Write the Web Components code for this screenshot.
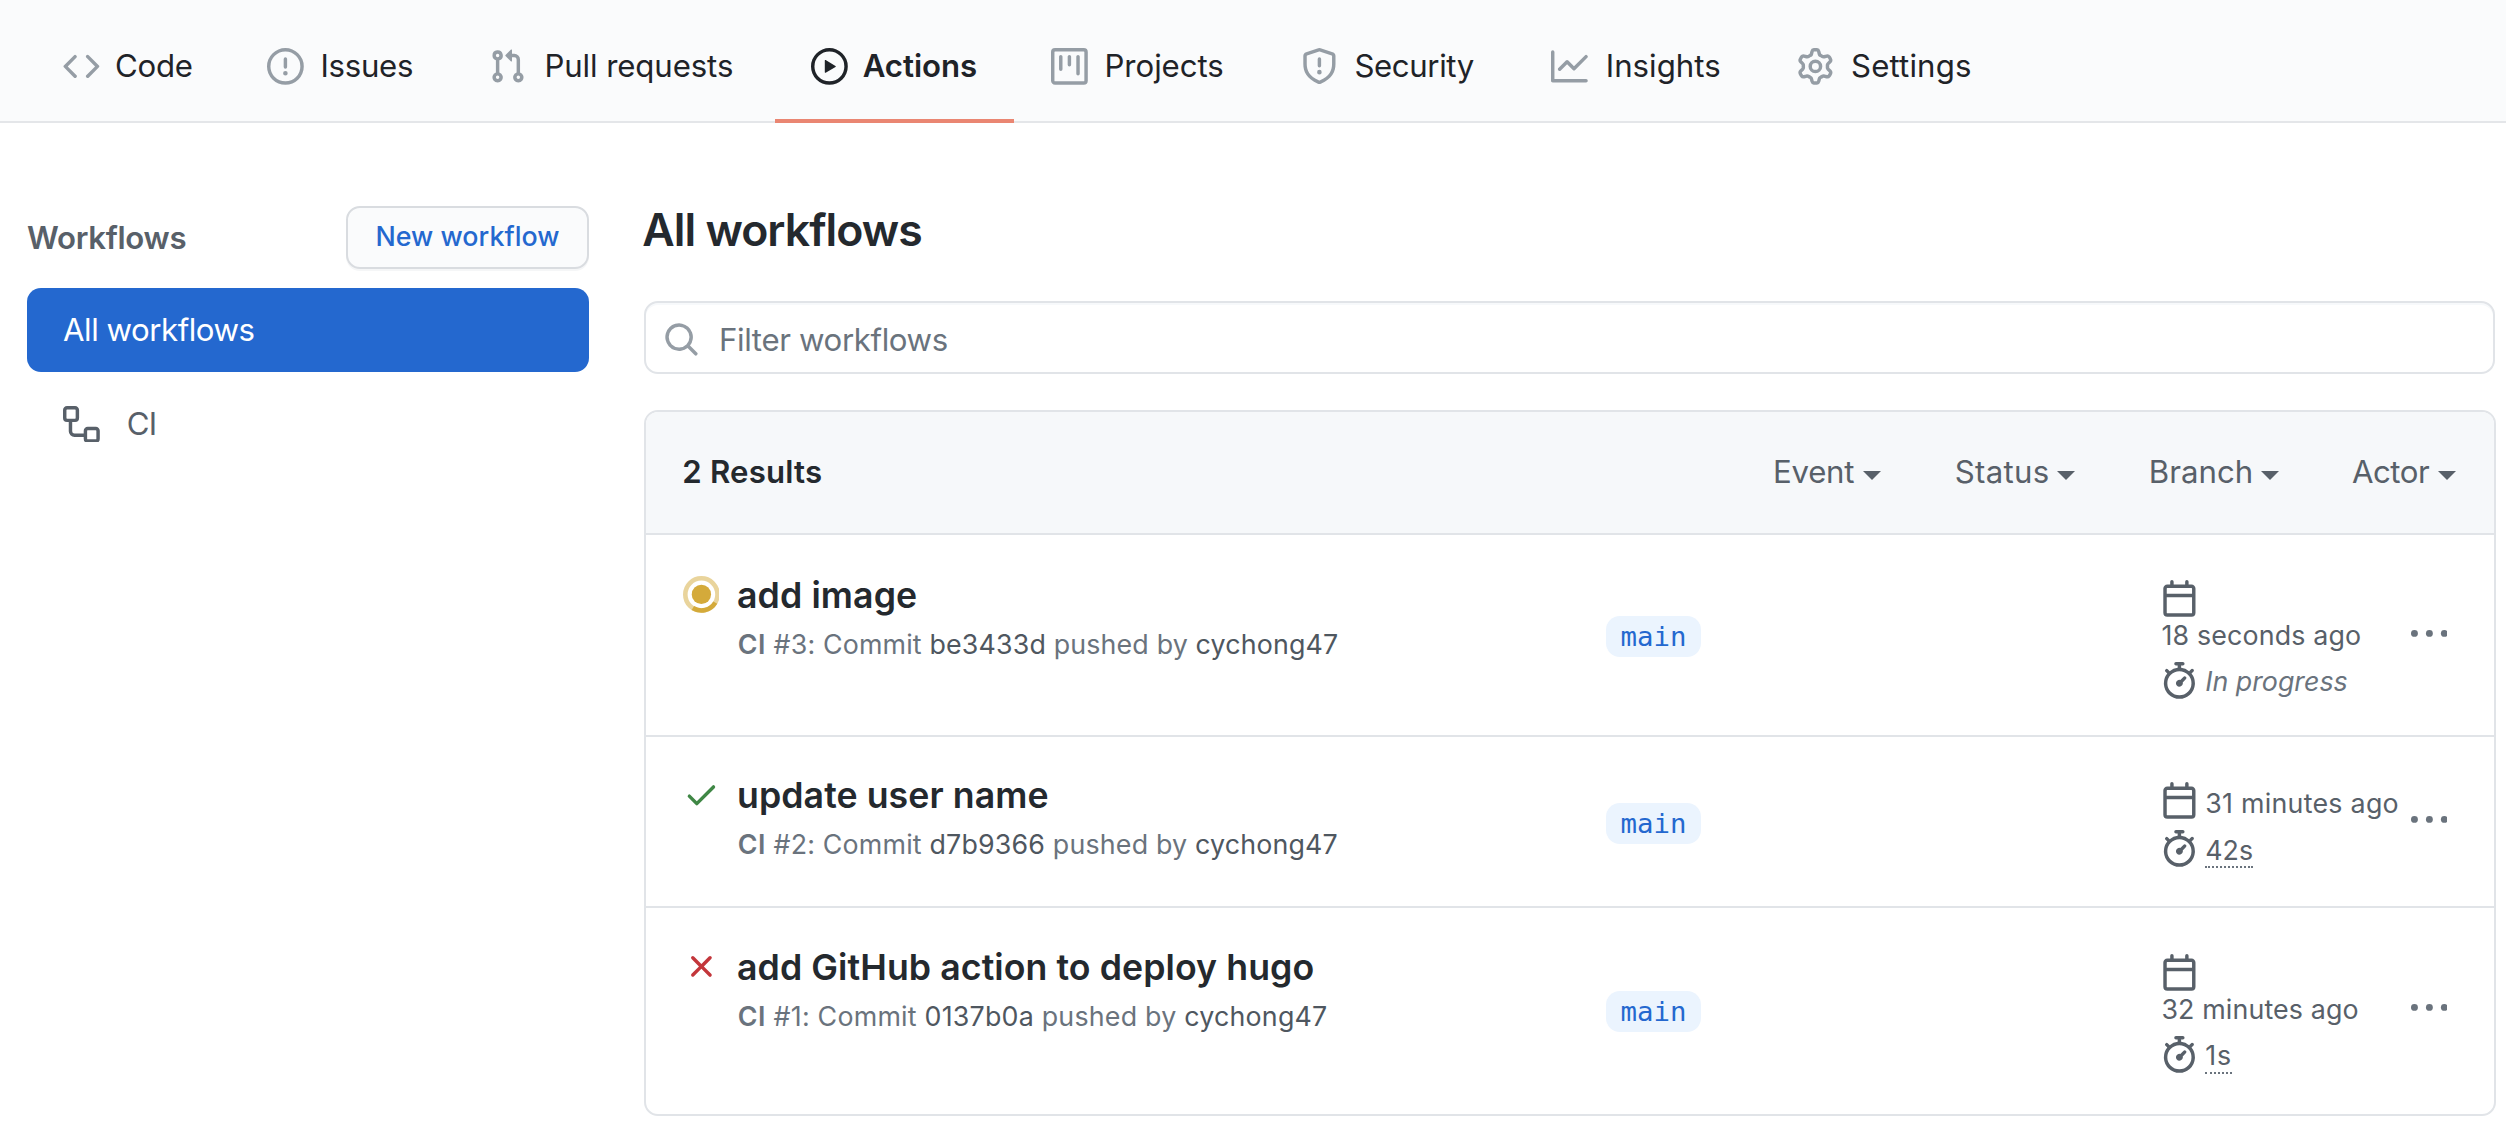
<!DOCTYPE html>
<html lang="en">
<head>
<meta charset="utf-8">
<title>Actions</title>
<style>
body{margin:0;background:#fff;color:#24292e;font-family:Inter,"Liberation Sans",sans-serif;font-size:31.2px}
</style>
</head>
<body>
<actions-page></actions-page>
<script>
const ICONS={
code:'<path d="M4.72 3.22a.75.75 0 011.06 1.06L2.06 8l3.72 3.72a.75.75 0 11-1.06 1.06L.47 8.53a.75.75 0 010-1.06l4.25-4.25zm6.56 0a.75.75 0 10-1.06 1.06L13.94 8l-3.72 3.72a.75.75 0 101.06 1.06l4.25-4.25a.75.75 0 000-1.06l-4.25-4.25z"/>',
issue:'<path d="M8 1.5a6.5 6.5 0 100 13 6.5 6.5 0 000-13zM0 8a8 8 0 1116 0A8 8 0 010 8zm9 3a1 1 0 11-2 0 1 1 0 012 0zm-.25-6.25a.75.75 0 00-1.5 0v3.5a.75.75 0 001.5 0v-3.5z"/>',
pull:'<path d="M7.177 3.073L9.573.677A.25.25 0 0110 .854v4.792a.25.25 0 01-.427.177L7.177 3.427a.25.25 0 010-.354zM3.75 2.5a.75.75 0 100 1.5.75.75 0 000-1.5zm-2.25.75a2.25 2.25 0 113 2.122v5.256a2.251 2.251 0 11-1.5 0V5.372A2.25 2.25 0 011.5 3.25zM11 2.5h-1V4h1a1 1 0 011 1v5.628a2.251 2.251 0 101.5 0V5A2.5 2.5 0 0011 2.5zm1 10.25a.75.75 0 111.5 0 .75.75 0 01-1.5 0zM3.75 12a.75.75 0 100 1.5.75.75 0 000-1.5z"/>',
play:'<path d="M1.5 8a6.5 6.5 0 1113 0 6.5 6.5 0 01-13 0zM8 0a8 8 0 100 16A8 8 0 008 0zM6.379 5.227A.25.25 0 006 5.442v5.117a.25.25 0 00.379.214l4.264-2.559a.25.25 0 000-.428L6.379 5.227z"/>',
project:'<path d="M1.75 0A1.75 1.75 0 000 1.75v12.5C0 15.216.784 16 1.75 16h12.5A1.75 1.75 0 0016 14.25V1.75A1.75 1.75 0 0014.25 0H1.75zM1.5 1.75a.25.25 0 01.25-.25h12.5a.25.25 0 01.25.25v12.5a.25.25 0 01-.25.25H1.75a.25.25 0 01-.25-.25V1.75zM11.75 3a.75.75 0 00-.75.75v7.5a.75.75 0 001.5 0v-7.5a.75.75 0 00-.75-.75zm-8.25.75a.75.75 0 011.5 0v5.5a.75.75 0 01-1.5 0v-5.5zM8 3a.75.75 0 00-.75.75v3.5a.75.75 0 001.5 0v-3.5A.75.75 0 008 3z"/>',
shield:'<path fill-rule="evenodd" d="M7.467.133a1.75 1.75 0 011.066 0l5.25 1.68A1.75 1.75 0 0115 3.48V7c0 1.566-.32 3.182-1.303 4.682-.983 1.498-2.585 2.813-5.032 3.855a1.7 1.7 0 01-1.33 0c-2.447-1.042-4.049-2.357-5.032-3.855C1.32 10.182 1 8.566 1 7V3.48a1.75 1.75 0 011.217-1.667l5.25-1.68zm.61 1.429a.25.25 0 00-.153 0l-5.25 1.68a.25.25 0 00-.174.238V7c0 1.358.275 2.666 1.057 3.86.784 1.194 2.121 2.34 4.366 3.297a.2.2 0 00.154 0c2.245-.956 3.582-2.104 4.366-3.298C13.225 9.666 13.5 8.36 13.5 7V3.48a.25.25 0 00-.174-.237l-5.25-1.68zM9 10.5a1 1 0 11-2 0 1 1 0 012 0zm-.25-5.75a.75.75 0 10-1.5 0v3a.75.75 0 001.5 0v-3z"/>',
graph:'<path d="M1.5 1.75a.75.75 0 00-1.5 0v12.5c0 .414.336.75.75.75h14.5a.75.75 0 000-1.5H1.5V1.75zm14.28 2.53a.75.75 0 00-1.06-1.06L10 7.94 7.53 5.47a.75.75 0 00-1.06 0L3.22 8.72a.75.75 0 001.06 1.06L7 7.06l2.47 2.47a.75.75 0 001.06 0l5.25-5.25z"/>',
gear:(d=>`<path d="${d}" stroke="currentColor" stroke-width="3" stroke-linejoin="round"/><path d="${d}" fill="#fafbfc"/><circle cx="8" cy="8" r="2.25" fill="none" stroke="currentColor" stroke-width="1.5"/>`)("M7.429 1.525a6.593 6.593 0 011.142 0c.036.003.108.036.137.146l.289 1.105c.147.56.55.967.997 1.189.174.086.341.183.501.29.417.278.97.423 1.53.27l1.102-.303c.11-.03.175.016.195.046.219.31.41.641.573.989.014.031.022.11-.059.19l-.815.806c-.411.406-.562.957-.53 1.456a4.588 4.588 0 010 .582c-.032.499.119 1.05.53 1.456l.815.806c.08.08.073.159.059.19a6.494 6.494 0 01-.573.99c-.02.029-.086.074-.195.045l-1.103-.303c-.559-.153-1.112-.008-1.529.27-.16.107-.327.204-.5.29-.449.222-.851.628-.998 1.189l-.289 1.105c-.029.11-.101.143-.137.146a6.613 6.613 0 01-1.142 0c-.036-.003-.108-.037-.137-.146l-.289-1.105c-.147-.56-.55-.967-.997-1.189a4.502 4.502 0 01-.501-.29c-.417-.278-.97-.423-1.53-.27l-1.102.303c-.11.03-.175-.016-.195-.046a6.492 6.492 0 01-.573-.989c-.014-.031-.022-.11.059-.19l.815-.806c.411-.406.562-.957.53-1.456a4.587 4.587 0 010-.582c.032-.499-.119-1.05-.53-1.456l-.815-.806c-.08-.08-.073-.159-.059-.19a6.44 6.44 0 01.573-.99c.02-.029.086-.075.195-.045l1.103.303c.559.153 1.112.008 1.529-.27.16-.107.327-.204.5-.29.449-.222.851-.628.998-1.189l.289-1.105c.029-.11.101-.143.137-.146z"),
workflow:'<path fill-rule="evenodd" d="M0 1.75C0 .784.784 0 1.75 0h3.5C6.216 0 7 .784 7 1.75v3.5A1.75 1.75 0 015.25 7H4v4a1 1 0 001 1h4v-1.25C9 9.784 9.784 9 10.75 9h3.5c.966 0 1.75.784 1.75 1.75v3.5A1.75 1.75 0 0114.25 16h-3.5A1.75 1.75 0 019 14.25v-.75H5A2.5 2.5 0 012.5 11V7h-.75A1.75 1.75 0 010 5.25v-3.5zm1.75-.25a.25.25 0 00-.25.25v3.5c0 .138.112.25.25.25h3.5a.25.25 0 00.25-.25v-3.5a.25.25 0 00-.25-.25h-3.5zm9 9a.25.25 0 00-.25.25v3.5c0 .138.112.25.25.25h3.5a.25.25 0 00.25-.25v-3.5a.25.25 0 00-.25-.25h-3.5z"/>',
search:'<path fill-rule="evenodd" d="M11.5 7a4.499 4.499 0 11-8.998 0A4.499 4.499 0 0111.5 7zm-.82 4.74a6 6 0 111.06-1.06l3.04 3.04a.75.75 0 11-1.06 1.06l-3.04-3.04z"/>',
calendar:'<path fill-rule="evenodd" d="M4.75 0a.75.75 0 01.75.75V2h5V.75a.75.75 0 011.5 0V2h1.25c.966 0 1.75.784 1.75 1.75v10.5A1.75 1.75 0 0113.25 16H2.75A1.75 1.75 0 011 14.25V3.75C1 2.784 1.784 2 2.75 2H4V.75A.75.75 0 014.75 0zm0 3.5h8.5a.25.25 0 01.25.25V6h-11V3.75a.25.25 0 01.25-.25h2zm-2.25 4v6.75c0 .138.112.25.25.25h10.5a.25.25 0 00.25-.25V7.5h-11z"/>',
stopwatch:'<path fill-rule="evenodd" d="M5.75.75A.75.75 0 016.5 0h3a.75.75 0 010 1.5h-.75v1l-.001.041a6.718 6.718 0 013.464 1.435l.007-.006.75-.75a.75.75 0 111.06 1.06l-.75.75-.006.007a6.75 6.75 0 11-10.548 0L2.72 5.03l-.75-.75a.75.75 0 011.06-1.06l.75.75.007.006A6.718 6.718 0 017.25 2.541a.756.756 0 010-.041v-1H6.5a.75.75 0 01-.75-.75zM8 14.5A5.25 5.25 0 108 4a5.25 5.25 0 000 10.5zm.389-6.7l1.33-1.33a.75.75 0 111.061 1.06L9.45 8.861A1.502 1.502 0 018 10.75a1.5 1.5 0 11.389-2.95z"/>',
kebab:'<circle cx="1.5" cy="8" r="1.5"/><circle cx="8" cy="8" r="1.5"/><circle cx="14.5" cy="8" r="1.5"/>',
running:'<circle cx="8" cy="8" r="4.2"/><circle cx="8" cy="8" r="7" fill="none" stroke="currentColor" stroke-width="2" opacity=".5"/><path d="M14.03 11.56A7 7 0 0 1 4.29 13.94" fill="none" stroke="currentColor" stroke-width="2"/>',
success:'<path d="M13.78 4.22a.75.75 0 010 1.06l-7.25 7.25a.75.75 0 01-1.06 0L2.22 9.28a.75.75 0 011.06-1.06L6 10.94l6.72-6.72a.75.75 0 011.06 0z"/>',
failure:'<path d="M3.72 3.72a.75.75 0 011.06 0L8 6.94l3.22-3.22a.75.75 0 111.06 1.06L9.06 8l3.22 3.22a.75.75 0 11-1.06 1.06L8 9.06l-3.22 3.22a.75.75 0 01-1.06-1.06L6.94 8 3.72 4.78a.75.75 0 010-1.06z"/>'
};
function define(name,render){
  customElements.define(name,class extends HTMLElement{
    connectedCallback(){
      if(this.shadowRoot)return;
      this.attachShadow({mode:'open'}).innerHTML=render(k=>this.getAttribute(k)||'',this);
    }
  });
}
define('oct-icon',a=>`<style>:host{display:block;flex:none;width:36.8px;height:36.8px}svg{display:block;width:100%;height:100%}</style><svg viewBox="0 0 16 16" fill="currentColor">${ICONS[a('name')]}</svg>`);

define('nav-tab',(a,el)=>`<style>
:host{display:flex;align-items:center;box-sizing:border-box;height:123px;padding:13.6px 0 0 36.5px;border-bottom:4px solid transparent;white-space:nowrap;color:#1f2328;line-height:40px}
:host([active]){border-color:#ea8672;font-weight:600}
oct-icon{color:#959da5}:host([active]) oct-icon{color:#1f2328}
</style><oct-icon name="${a('icon')}"></oct-icon><slot></slot>`);

define('repo-nav',()=>{
const tabs=[['code','Code',204,15.2,-.29],['issue','Issues',221.6,16.6,-.26],['pull','Pull requests',322.9,19,-.1],['play','Actions',239.5,14.4,-.04],['project','Projects',250,16.7,-.06],['shield','Security',250,16.7,-.4],['graph','Insights',246,18,.02],['gear','Settings',260,17.2,.15]];
return `<style>:host{display:flex;height:123px;padding-left:26.5px;background:#fafbfc;box-shadow:inset 0 -2px #e4e6e9}nav-tab{flex:none}</style>`+
tabs.map(([i,t,w,g,l])=>`<nav-tab icon="${i}" ${i=='play'?'active':''} style="width:${w}px"><span style="margin-left:${g}px;letter-spacing:${l}px">${t}</span></nav-tab>`).join('')});

define('side-item',a=>`<style>
:host{display:flex;align-items:center;box-sizing:border-box;height:84px;padding:0 0 0 36px;border-radius:14px;color:#586069;gap:27px;line-height:40px}
:host([selected]){background:#2468cf;color:#fff}
</style>${a('icon')?`<oct-icon name="${a('icon')}"></oct-icon>`:''}<slot></slot>`);

define('side-bar',()=>`<style>
:host{display:flex;flex-direction:column;flex:none;width:562px;padding-top:83px}
header{display:flex;align-items:center;justify-content:space-between;margin-bottom:19px}
h3{margin:0;font-size:31.2px;font-weight:600;letter-spacing:-.3px;color:#586069}
button{box-sizing:border-box;width:243px;height:63px;padding:0 0 3px;border:2px solid #d9dce0;border-radius:14px;background:#fafbfc;box-shadow:0 2px 0 #f5f6f7;color:#2468cf;font:500 26.8px Inter,sans-serif;letter-spacing:.06px;white-space:nowrap}
side-item+side-item{margin-top:10px}
</style><header><h3>Workflows</h3><button>New workflow</button></header>
<side-item selected><span style="letter-spacing:-.47px">All workflows</span></side-item>
<side-item icon="workflow"><span style="letter-spacing:-.78px">CI</span></side-item>`);

define('filter-box',()=>`<style>
:host{display:flex;align-items:center;box-sizing:border-box;height:73px;padding:4.5px 0 0 16.7px;border:2px solid #e1e4e8;border-radius:14px;box-shadow:inset 0 2px 0 #f7f9fb;color:#959da5;gap:19.5px}
span{color:#6a737d;letter-spacing:-.37px}
</style><oct-icon name="search"></oct-icon><span>Filter workflows</span>`);

define('filter-menu',a=>`<style>
:host{display:flex;align-items:center;color:#586069}
i{width:0;height:0;margin-top:7px;border:9.2px solid transparent;border-top-color:currentColor;border-bottom:0}
span{width:${a('w')}px;letter-spacing:${a('ls')}px}
</style><span><slot></slot></span><i></i>`);

define('branch-label',()=>`<style>
:host{display:flex;align-items:center;justify-content:center;box-sizing:border-box;width:95px;height:41px;border-radius:14px;background:#ebf4fe;color:#2468cf;font:27.4px "DejaVu Sans Mono",monospace}
</style><slot></slot>`);

define('run-row',a=>{
const [pad,badge,cal,dots]=a('tops').split(' ');
const wrap=a('wrap')!=='';
const time=`<span class="when" style="letter-spacing:${a('tls')}px">${a('time')}</span>`;
return `<style>
:host{display:grid;grid-template-columns:960px 555px 249.5px 1fr;box-sizing:border-box;border-bottom:2px solid #e1e4e8;white-space:nowrap}
:host(:last-of-type){border-bottom:0}
.info{display:grid;grid-template-columns:36.8px 1fr;column-gap:17.6px;padding:${pad}px 0 0 36.6px;align-content:start}
.info oct-icon{margin-top:4px;color:${a('color')}}
h4{margin:0;font-size:35.7px;font-weight:600;line-height:46px;letter-spacing:${a('hls')}px}
p{grid-column:2;margin:3px 0 0 .7px;font-size:26.8px;line-height:46px;color:#6a737d;letter-spacing:${a('pls')}px}
p b{font-weight:600;letter-spacing:.5px}p span{color:#4f575f}
branch-label{margin-top:${badge}px}
.times{padding-top:${cal}px;color:#586069;font-size:26.8px}
.line{display:flex;gap:7.4px}
.when{line-height:36.8px;display:block}
.line .when{margin-top:3px}
.block{padding-left:.4px}
.dur{margin-top:8.2px}
.dur span{margin-top:4.6px;line-height:31.4px;height:31.4px}
.dur .dot{border-bottom:2px dotted #6a737d}
.dur .prog{font-style:italic;color:#6a737d}
.menu{margin-top:${dots}px;color:#6a737d}
</style>
<div class="info"><oct-icon name="${a('state')}"></oct-icon><h4>${a('name')}</h4><p><b>CI</b> #${a('num')}: Commit <span>${a('sha')}</span> pushed by <span>cychong47</span></p></div>
<branch-label>main</branch-label>
<div class="times">${wrap?`<oct-icon name="calendar"></oct-icon><div class="block">${time}</div>`:`<div class="line"><oct-icon name="calendar"></oct-icon>${time}</div>`}
<div class="line dur"><oct-icon name="stopwatch"></oct-icon><span class="${a('state')=='running'?'prog':'dot'}" style="letter-spacing:${a('dls')}px">${a('dur')}</span></div></div>
<oct-icon class="menu" name="kebab"></oct-icon>`});

define('run-list',()=>`<style>
:host{display:block;box-sizing:border-box;width:1852px;border:2px solid #e1e4e8;border-radius:14px;overflow:hidden}
header{display:flex;align-items:center;justify-content:space-between;box-sizing:border-box;height:123px;padding:0 37.6px 0 36.2px;background:#f6f8fa;border-bottom:2px solid #e1e4e8}
strong{font-weight:600;letter-spacing:.2px}
nav{display:flex;gap:73.4px}
</style>
<header><strong>2 Results</strong><nav>
<filter-menu w="90.3" ls="-.29">Event</filter-menu><filter-menu w="102.6" ls=".28">Status</filter-menu><filter-menu w="111.9" ls=".04">Branch</filter-menu><filter-menu w="86.4" ls="-.5">Actor</filter-menu></nav></header>
<run-row style="height:202px" tops="37 81 45 79.6" state="running" color="#d4aa3a" name="add image" hls=".1" num="3" sha="be3433d" pls=".16" wrap="1" time="18 seconds ago" tls=".16" dur="In progress" dls="0"></run-row>
<run-row style="height:171px" tops="35.4 66 45 63.6" state="success" color="#3f8745" name="update user name" hls=".07" num="2" sha="d7b9366" pls=".18" time="31 minutes ago" tls=".27" dur="42s" dls=".1"></run-row>
<run-row style="height:206px" tops="36.4 83 46 80.6" state="failure" color="#c3363b" name="add GitHub action to deploy hugo" hls=".07" num="1" sha="0137b0a" pls=".22" wrap="1" time="32 minutes ago" tls=".14" dur="1s" dls=".8"></run-row>`);

define('actions-page',()=>`<style>
:host{display:block;width:2506px;height:1124px;overflow:hidden}
.body{display:flex;gap:55px;padding-left:27px}
main{width:1851px;flex:none}
h1{margin:71.8px 0 36.2px -1.8px;font-size:44.6px;font-weight:600;line-height:70px;letter-spacing:-.96px}
run-list{margin-top:36px}
</style><repo-nav></repo-nav>
<div class="body"><side-bar></side-bar><main><h1>All workflows</h1><filter-box></filter-box><run-list></run-list></main></div>`);
</script>
</body>
</html>
